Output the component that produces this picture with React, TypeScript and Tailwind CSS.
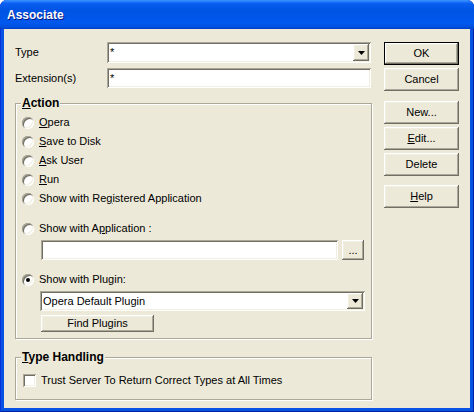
import type { ReactNode } from 'react'

/* Bevels in the XP classic palette: face #ECE9D8, light #F1EFE2, shadow #ACA899, dark #716F64. */
const raised =
  'shadow-[inset_-1px_-1px_#716F64,inset_1px_1px_#FFFFFF,inset_-2px_-2px_#ACA899,inset_2px_2px_#F1EFE2]'
const sunken =
  'shadow-[inset_1px_1px_#ACA899,inset_-1px_-1px_#FFFFFF,inset_2px_2px_#716F64,inset_-2px_-2px_#F1EFE2]'

function U({ children }: { children: string }) {
  return <span className="underline underline-offset-[1px]">{children}</span>
}

function Button({ children, w = 'w-[75px] h-[23px]', isDefault }: { children: ReactNode; w?: string; isDefault?: boolean }) {
  return (
    <button
      type="button"
      className={`${w} flex items-center justify-center bg-[#ECE9D8] ${
        isDefault ? 'border border-black' : ''
      }`}
    >
      <span className={`flex h-full w-full items-center justify-center ${raised}`}>{children}</span>
    </button>
  )
}

function Arrow() {
  return (
    <span className={`flex h-full w-[16px] shrink-0 items-center justify-center bg-[#ECE9D8] ${raised}`}>
      <svg width="7" height="4" viewBox="0 0 7 4">
        <polygon points="0,0 7,0 3.5,4" fill="#000" />
      </svg>
    </span>
  )
}

function Combo({ value, className }: { value: string; className: string }) {
  return (
    <div className={`${className} flex bg-white p-[2px] ${sunken}`}>
      <span className="flex-1 truncate pl-[1px] leading-[16px]">{value}</span>
      <Arrow />
    </div>
  )
}

function Radio({ checked, children }: { checked?: boolean; children: ReactNode }) {
  return (
    <div className="flex h-[19px] items-center gap-[5px]">
      <span className={`flex h-[12px] w-[12px] shrink-0 items-center justify-center rounded-full bg-white ${sunken}`}>
        {checked && <span className="h-[4px] w-[4px] rounded-full bg-black" />}
      </span>
      <span>{children}</span>
    </div>
  )
}

function Group({ label, className, children }: { label: ReactNode; className: string; children: ReactNode }) {
  return (
    <div
      className={`relative border border-[#ACA899] shadow-[1px_1px_0_#FFFFFF,inset_1px_1px_0_#FFFFFF] ${className}`}
    >
      <span className="absolute left-[5px] top-[-8px] bg-[#ECE9D8] px-[1px] text-[12px] font-bold leading-[14px]">
        {label}
      </span>
      {children}
    </div>
  )
}

export default function App() {
  return (
    <div className="flex h-[412px] w-[474px] flex-col overflow-hidden rounded-t-[7px] bg-[#0853E4] font-['Liberation_Sans',Arial,sans-serif] text-[11px] text-black shadow-[inset_1px_0_#0831D9,inset_-1px_0_#001EA0,inset_0_-1px_#001EA0]">
      <div className="flex h-[29px] shrink-0 items-center bg-[linear-gradient(180deg,#3D95FF_0%,#0A5FF2_12%,#0054E3_35%,#0058EE_80%,#0050DD_93%,#003FC4_100%)] pl-[7px]">
        <span className="text-[12px] font-bold text-white [text-shadow:1px_1px_#0A1883]">Associate</span>
      </div>

      <div className="mx-[4px] mb-[4px] flex flex-1 bg-[#ECE9D8] pl-[11px] pt-[13px]">
        <div className="flex w-[357px] flex-col">
          <div className="flex h-[21px] items-center">
            <span className="w-[92px]">Type</span>
            <Combo value="*" className="h-[21px] w-[264px]" />
          </div>
          <div className="mt-[5px] flex h-[20px] items-center">
            <span className="w-[92px]">Extension(s)</span>
            <div className={`h-[20px] w-[264px] bg-white pl-[3px] leading-[20px] ${sunken}`}>*</div>
          </div>

          <Group label={<><U>A</U>ction</>} className="mt-[15px] h-[236px] pl-[6px] pt-[9px]">
            <Radio>
              <U>O</U>pera
            </Radio>
            <Radio>
              <U>S</U>ave to Disk
            </Radio>
            <Radio>
              <U>A</U>sk User
            </Radio>
            <Radio>
              <U>R</U>un
            </Radio>
            <Radio>
              Show with Re<U>g</U>istered Application
            </Radio>
            <div className="mt-[11px]">
              <Radio>
                Show with A<U>p</U>plication :
              </Radio>
            </div>
            <div className="ml-[19px] mt-[2px] flex gap-[4px]">
              <div className={`h-[20px] w-[297px] bg-white ${sunken}`} />
              <Button w="w-[22px] h-[20px]">...</Button>
            </div>
            <div className="mt-[10px]">
              <Radio checked>Show with Plugin:</Radio>
            </div>
            <Combo value="Opera Default Plugin" className="ml-[18px] mt-[2px] h-[20px] w-[325px]" />
            <div className="ml-[19px] mt-[4px]">
              <Button w="w-[113px] h-[17px]">Find Plugins</Button>
            </div>
          </Group>

          <Group label={<><U>T</U>ype Handling</>} className="mt-[18px] h-[43px] pl-[7px] pt-[14px]">
            <div className="flex h-[16px] items-center gap-[5px]">
              <span className={`h-[13px] w-[13px] shrink-0 bg-white ${sunken}`} />
              <span>Trust Server To Return Correct Types at All Times</span>
            </div>
          </Group>
        </div>

        <div className="ml-[12px] flex w-[75px] flex-col">
          <Button isDefault>OK</Button>
          <div className="mt-[3px]">
            <Button>Cancel</Button>
          </div>
          <div className="mt-[10px]">
            <Button>New...</Button>
          </div>
          <div className="mt-[3px]">
            <Button>
              <U>E</U>dit...
            </Button>
          </div>
          <div className="mt-[3px]">
            <Button>Delete</Button>
          </div>
          <div className="mt-[9px]">
            <Button>
              <U>H</U>elp
            </Button>
          </div>
        </div>
      </div>
    </div>
  )
}
